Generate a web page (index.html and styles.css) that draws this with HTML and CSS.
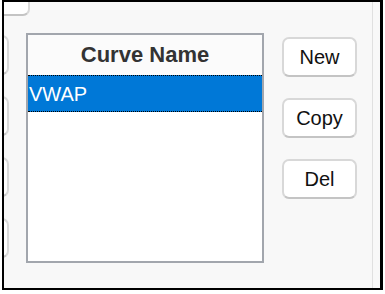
FILE: index.html
```html
<!DOCTYPE html>
<html lang="en">
<head>
    <meta charset="UTF-8">
    <title>Curves</title>
    <link rel="stylesheet" href="styles.css">
</head>
<body>
    <div class="frame">
        <div class="content">
            <div class="tab-row">
                <div class="btn tab"></div>
            </div>
            <div class="main">
                <div class="stubs">
                    <div class="btn stub"></div>
                    <div class="btn stub"></div>
                    <div class="btn stub"></div>
                    <div class="btn stub"></div>
                </div>
                <div class="curve-list">
                    <div class="list-header">Curve Name</div>
                    <div class="list-item selected">VWAP</div>
                </div>
                <div class="actions">
                    <button class="btn action">New</button>
                    <button class="btn action">Copy</button>
                    <button class="btn action">Del</button>
                </div>
            </div>
        </div>
        <div class="divider"></div>
    </div>
</body>
</html>
```

FILE: styles.css
```css
body {
    margin: 0;
    padding: 0;
    background-color: #fff;
    font-family: "Liberation Sans", Arial, sans-serif;
}
.frame {
    display: flex;
    width: 376px;
    height: 286px;
    margin: 0 0 0 2px;
    border: 2px solid #000;
    border-right-width: 3px;
    background-color: #f8f8f8;
    overflow: hidden;
}
.content {
    width: 368px;
    display: flex;
    flex-direction: column;
}
.divider {
    width: 1px;
    background-color: #e0e0e0;
}
.btn {
    box-sizing: border-box;
    background-color: #fff;
    border: 2px solid #d8d8d8;
    border-bottom-color: #c4c4c4;
    border-radius: 7px;
}
.tab-row {
    height: 14px;
}
.tab {
    width: 46px;
    height: 40px;
    margin-left: -20px;
    margin-top: -26px;
}
.main {
    display: flex;
    align-items: flex-start;
    padding-top: 17px;
}
.stubs {
    width: 5px;
    display: flex;
    flex-direction: column;
    gap: 21px;
    padding-top: 2px;
}
.stub {
    width: 40px;
    height: 40px;
    margin-left: -35px;
}
.curve-list {
    box-sizing: border-box;
    width: 238px;
    height: 230px;
    margin-left: 17px;
    border: 2px solid #a2a6ad;
    background-color: #fff;
}
.list-header {
    height: 40px;
    line-height: 40px;
    text-align: center;
    font-weight: bold;
    font-size: 22px;
    color: #333;
    background-color: #fbfbfb;
}
.list-item {
    height: 37px;
    line-height: 37px;
    padding-left: 1px;
    font-size: 20px;
}
.list-item.selected {
    box-sizing: border-box;
    background-color: #0078d7;
    color: #fff;
    border-top: 1px dotted #000;
    border-bottom: 1px dotted #000;
}
.actions {
    display: flex;
    flex-direction: column;
    gap: 21px;
    margin-left: 18px;
    padding-top: 4px;
}
.action {
    width: 75px;
    height: 40px;
    padding: 0;
    font-family: "Liberation Sans", Arial, sans-serif;
    font-size: 20px;
    color: #111;
    cursor: pointer;
}
```
